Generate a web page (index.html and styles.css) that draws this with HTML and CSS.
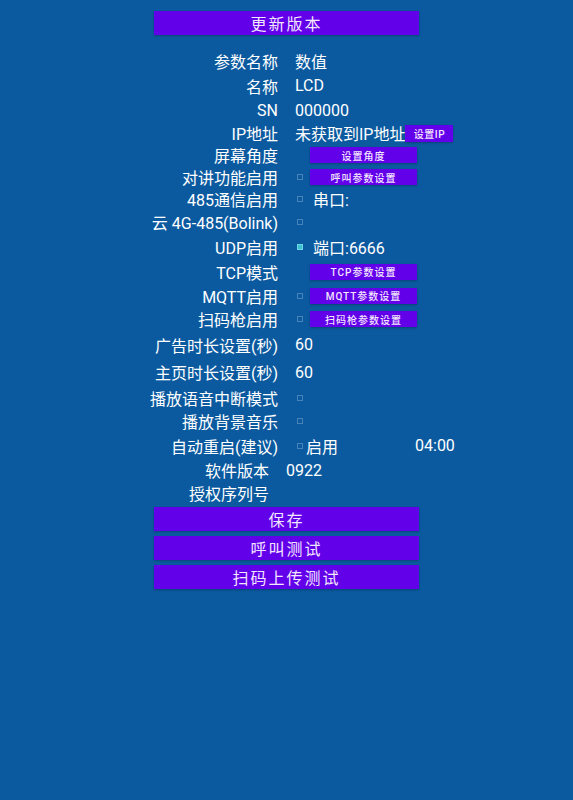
FILE: index.html
```html
<!DOCTYPE html>
<html lang="zh-CN">
<head>
    <meta charset="UTF-8">
    <title>设置</title>
    <link rel="stylesheet" href="styles.css">
</head>
<body>
    <div class="panel">
        <button class="bigBtn topBtn">更新版本</button>

        <div class="settings">
            <div class="row h25"><span class="label">参数名称</span><span class="value">数值</span></div>
            <div class="row h25"><span class="label">名称</span><span class="value">LCD</span></div>
            <div class="row h24"><span class="label">SN</span><span class="value">000000</span></div>
            <div class="row"><span class="label">IP地址</span><span class="value">未获取到IP地址<button class="smallBtn ipBtn">设置IP</button></span></div>
            <div class="row"><span class="label">屏幕角度</span><span class="value"><span class="boxSpace"></span><button class="smallBtn">设置角度</button></span></div>
            <div class="row"><span class="label">对讲功能启用</span><span class="value"><span class="check"></span><button class="smallBtn">呼叫参数设置</button></span></div>
            <div class="row"><span class="label">485通信启用</span><span class="value"><span class="check"></span><span class="after">串口:</span></span></div>
            <div class="row h24"><span class="label">云 4G-485(Bolink)</span><span class="value"><span class="check"></span></span></div>
            <div class="row h25"><span class="label">UDP启用</span><span class="value"><span class="check checked"></span><span class="after">端口:6666</span></span></div>
            <div class="row h25"><span class="label">TCP模式</span><span class="value"><span class="boxSpace"></span><button class="smallBtn">TCP参数设置</button></span></div>
            <div class="row h23"><span class="label">MQTT启用</span><span class="value"><span class="check"></span><button class="smallBtn">MQTT参数设置</button></span></div>
            <div class="row h24"><span class="label">扫码枪启用</span><span class="value"><span class="check"></span><button class="smallBtn">扫码枪参数设置</button></span></div>
            <div class="row h27"><span class="label">广告时长设置(秒)</span><span class="value">60</span></div>
            <div class="row h28"><span class="label">主页时长设置(秒)</span><span class="value">60</span></div>
            <div class="row h23"><span class="label">播放语音中断模式</span><span class="value"><span class="check"></span></span></div>
            <div class="row h24"><span class="label">播放背景音乐</span><span class="value"><span class="check"></span></span></div>
            <div class="row h25"><span class="label">自动重启(建议)</span><span class="value"><span class="check"></span><span class="enable">启用</span><span class="time">04:00</span></span></div>
            <div class="row h24 short"><span class="label">软件版本</span><span class="value">0922</span></div>
            <div class="row short"><span class="label">授权序列号</span><span class="value"></span></div>
        </div>

        <div class="actions">
            <button class="bigBtn">保存</button>
            <button class="bigBtn">呼叫测试</button>
            <button class="bigBtn">扫码上传测试</button>
        </div>
    </div>
</body>
</html>
```

FILE: styles.css
```css
/* Page */
body {
  margin: 0;
  min-height: 100vh;
  background: #0b5a9f;
  color: #ffffff;
  font-family: Roboto, "Noto Sans CJK SC", sans-serif;
}

.panel {
  width: 265px;
  margin: 0 auto;
  padding-top: 11px;
}

/* Big purple buttons */
.bigBtn {
  display: block;
  width: 100%;
  height: 24px;
  border: none;
  background: #6200ea;
  color: #f3e6ff;
  font: 16px Roboto, "Noto Sans CJK SC", sans-serif;
  letter-spacing: 2px;
  padding: 0;
  box-shadow: 0 1px 2px rgba(0, 0, 0, 0.25);
}

.topBtn {
  margin-bottom: 13px;
}

/* Settings rows */
.settings {
  display: flex;
  flex-direction: column;
}

.row {
  display: flex;
  align-items: center;
  height: 22px;
  font-size: 16px;
}

.h23 { height: 23px; }
.h24 { height: 24px; }
.h25 { height: 25px; }
.h27 { height: 27px; }
.h28 { height: 28px; }

.label {
  flex: 0 0 124px;
  min-width: 0;
  display: flex;
  justify-content: flex-end;
  white-space: nowrap;
}

.value {
  display: flex;
  align-items: center;
  margin-left: 17px;
  white-space: nowrap;
  flex: 1;
}

.short .label {
  flex-basis: 115px;
}

/* Checkboxes */
.check,
.boxSpace {
  width: 6px;
  height: 6px;
  margin-left: 2px;
  flex: none;
}

.check {
  border: 1px solid rgba(255, 255, 255, 0.25);
  width: 4px;
  height: 4px;
}

.check.checked {
  background: #3ec1d3;
  border-color: #6fd6e4;
}

.after {
  margin-left: 10px;
}

.enable {
  margin-left: 3px;
}

.time {
  margin-left: 77px;
}

/* Small purple buttons */
.smallBtn {
  width: 107px;
  height: 16px;
  margin-left: 7px;
  border: none;
  padding: 0;
  background: #6200ea;
  color: #f3e6ff;
  font: 500 10px Roboto, "Noto Sans CJK SC", sans-serif;
  letter-spacing: 1px;
  box-shadow: 0 1px 2px rgba(0, 0, 0, 0.25);
}

.ipBtn {
  width: 48px;
  height: 17px;
  margin-left: 0;
  letter-spacing: 0.5px;
}

/* Bottom actions */
.actions {
  display: flex;
  flex-direction: column;
  gap: 5px;
  margin-top: 3px;
}
```
